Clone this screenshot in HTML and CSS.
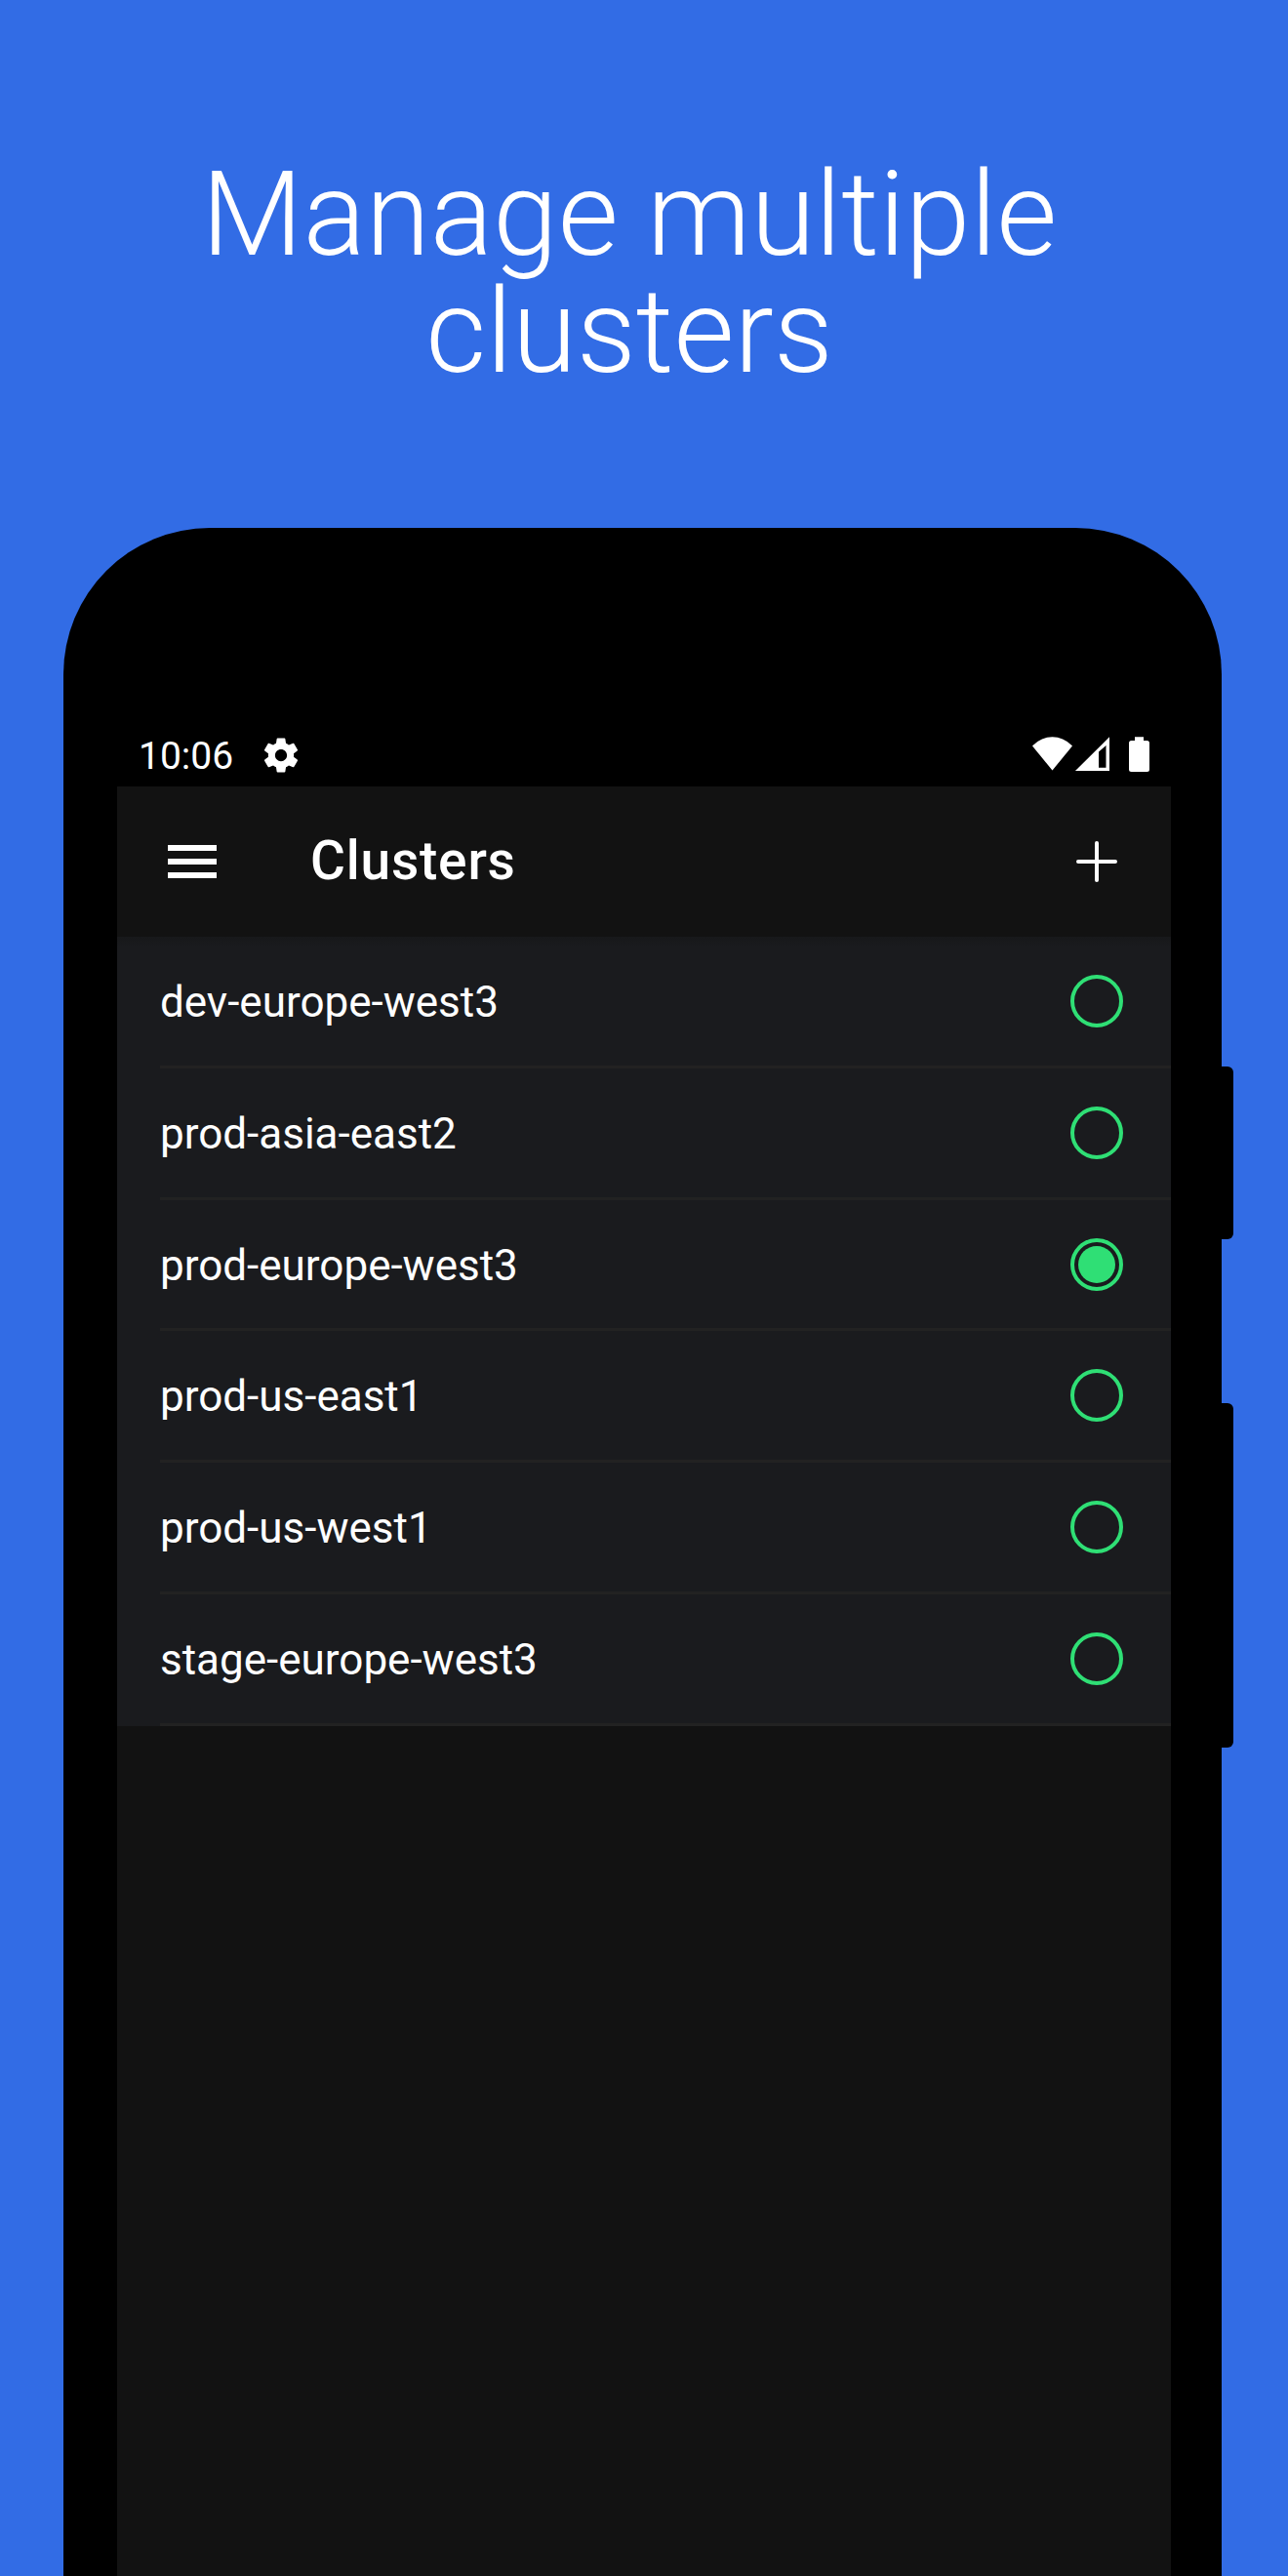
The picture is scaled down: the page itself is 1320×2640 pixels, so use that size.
FILE: index.html
```html
<!DOCTYPE html>
<html lang="en">
<head>
<meta charset="utf-8">
<title>Manage multiple clusters</title>
<link rel="stylesheet" href="styles.css">
</head>
<body>
<main class="promo">
  <h1 class="headline">Manage multiple<br>clusters</h1>
  <section class="phone">
    <i class="side-button power"></i>
    <i class="side-button volume"></i>
    <div class="status-bar">
      <span class="time">10:06</span>
      <svg class="gear" viewBox="0 0 24 24"><path d="M19.43 12.98c.04-.32.07-.64.07-.98s-.03-.66-.07-.98l2.11-1.65c.19-.15.24-.42.12-.64l-2-3.46c-.12-.22-.39-.3-.61-.22l-2.49 1c-.52-.4-1.08-.73-1.69-.98l-.38-2.65C14.46 2.18 14.25 2 14 2h-4c-.25 0-.46.18-.49.42l-.38 2.65c-.61.25-1.17.59-1.69.98l-2.49-1c-.23-.09-.49 0-.61.22l-2 3.46c-.13.22-.07.49.12.64l2.11 1.65c-.04.32-.07.65-.07.98s.03.66.07.98l-2.11 1.65c-.19.15-.24.42-.12.64l2 3.46c.12.22.39.3.61.22l2.49-1c.52.4 1.08.73 1.69.98l.38 2.65c.03.24.24.42.49.42h4c.25 0 .46-.18.49-.42l.38-2.65c.61-.25 1.17-.59 1.69-.98l2.49 1c.23.09.49 0 .61-.22l2-3.46c.12-.22.07-.49-.12-.64l-2.11-1.65zM12 15.5c-1.93 0-3.5-1.57-3.5-3.5s1.57-3.5 3.5-3.5 3.5 1.57 3.5 3.5-1.57 3.5-3.5 3.5z"/></svg>
      <svg class="indicators" width="121" height="37" viewBox="0 0 121 37"><path d="M0 9.5Q9 0.3 20.5 0.3T41 9.5L20.5 34.5Z"/><path fill-rule="evenodd" d="M44 35L79 .3V35ZM68 15.500V31.700H75.500V9Z"/><path d="M105 .3h9V4h3.500q2.500 0 2.500 2.500V33.500q0 2.500-2.500 2.500h-16q-2.500 0-2.500-2.500V6.500q0-2.500 2.500-2.500H105Z"/></svg>
    </div>
    <div class="screen">
      <header class="toolbar">
        <svg class="menu" width="50" height="34" viewBox="0 0 50 34"><path d="M0 0h50v6H0zM0 14h50v6H0zM0 28h50v6H0z"/></svg>
        <h2 class="title">Clusters</h2>
        <svg class="add" width="42" height="42" viewBox="0 0 42 42"><path d="M21 2v38M2 21h38"/></svg>
      </header>
      <ul class="clusters">
        <li class="cluster"><div class="row"><span class="name">dev-europe-west3</span><i class="radio"></i></div></li>
        <li class="cluster"><div class="row"><span class="name">prod-asia-east2</span><i class="radio"></i></div></li>
        <li class="cluster"><div class="row"><span class="name">prod-europe-west3</span><i class="radio selected"></i></div></li>
        <li class="cluster"><div class="row"><span class="name">prod-us-east1</span><i class="radio"></i></div></li>
        <li class="cluster"><div class="row"><span class="name">prod-us-west1</span><i class="radio"></i></div></li>
        <li class="cluster"><div class="row"><span class="name">stage-europe-west3</span><i class="radio"></i></div></li>
      </ul>
    </div>
  </section>
</main>
</body>
</html>
```
FILE: styles.css
```css
* { box-sizing: border-box; }

body {
  margin: 0;
  background: #326ce5;
  color: #fff;
  font-family: Roboto, sans-serif;
}

.promo {
  height: 2640px;
  overflow: hidden;
  display: flex;
  flex-direction: column;
}

.headline {
  flex: none;
  height: 541px;
  margin: 0;
  padding: 160px 30px 0 0;
  font-size: 120px;
  font-weight: 300;
  line-height: 120px;
  text-align: center;
}

.phone {
  position: relative;
  flex: 1;
  display: flex;
  flex-direction: column;
  width: 1187px;
  margin-left: 65px;
  padding: 186px 52px 0 55px;
  background: #000;
  border-radius: 150px 150px 0 0;
}

.side-button {
  position: absolute;
  left: 1177px;
  width: 22px;
  background: #000;
  border-radius: 6px;
}

.power { top: 552px; height: 177px; }
.volume { top: 897px; height: 353px; }

.status-bar {
  flex: none;
  height: 79px;
  padding: 14px 21px 0 22px;
  display: flex;
  align-items: center;
  font-size: 39px;
}

.time { margin-top: 2px; }

.gear {
  width: 42px;
  height: 42px;
  margin-left: 28px;
  fill: #fff;
}

.indicators {
  margin-left: auto;
  fill: #fff;
}

.screen {
  flex: 1;
  background: #121212;
}

.toolbar {
  height: 154.2px;
  padding: 0 55px 0 52px;
  display: flex;
  align-items: center;
}

.menu { fill: #fff; }

.title {
  margin: 0 auto 2px 96px;
  font-size: 55px;
  font-weight: 500;
  letter-spacing: 0.0145em;
}

.add {
  stroke: #fff;
  stroke-width: 4;
  stroke-linecap: round;
}

.clusters {
  margin: 0;
  padding: 0;
  list-style: none;
  background: linear-gradient(#17181a, #1a1b1e 10px);
}

.cluster {
  padding-left: 44px;
}

.row {
  height: 134.75px;
  padding-right: 49px;
  display: flex;
  align-items: center;
  justify-content: space-between;
  border-bottom: 3px solid #222;
  font-size: 44px;
}

.name { margin-top: 2px; }

.radio {
  width: 54px;
  height: 54px;
  padding: 4px;
  border: 4px solid #2fdf75;
  border-radius: 50%;
}

.selected::before {
  content: "";
  display: block;
  width: 38px;
  height: 38px;
  border-radius: 50%;
  background: #2fdf75;
}
```
